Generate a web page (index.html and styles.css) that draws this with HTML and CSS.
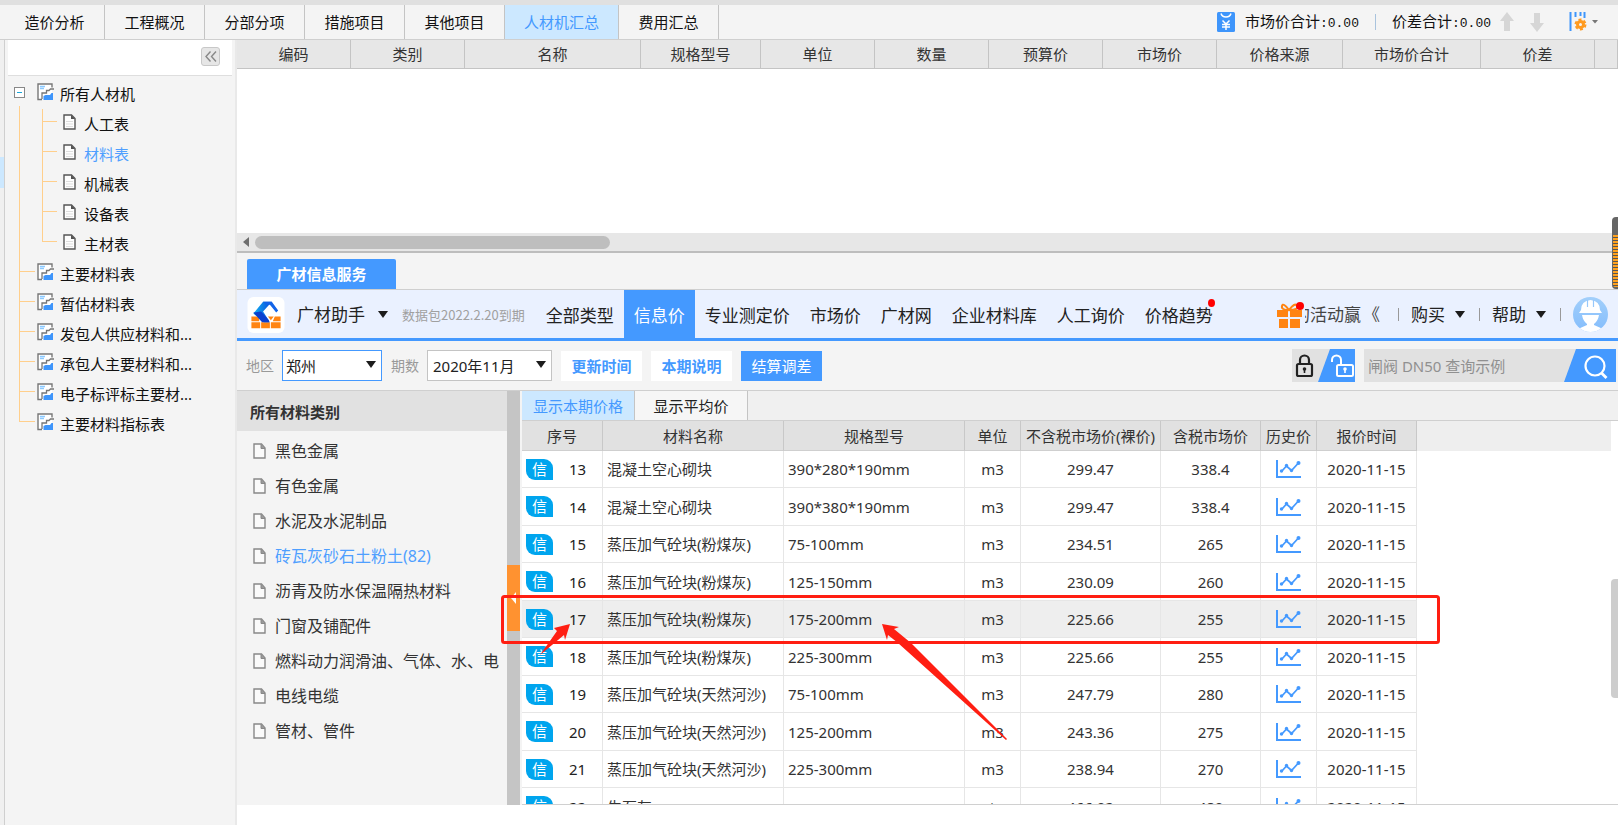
FILE: index.html
```html
<!DOCTYPE html>
<html lang="zh-CN">
<head>
<meta charset="utf-8">
<title>人材机汇总</title>
<link rel="stylesheet" href="styles.css">
</head>
<body>
<svg class="defs" width="0" height="0" aria-hidden="true">
  <symbol id="sheet" viewBox="0 0 17 18"><path d="M1 1h14v16H1z" fill="#fff"/><path d="M5 16.500H1V1h14v3.500" fill="none" stroke="#777" stroke-width="1.400"/><path d="M3 3.500h5M3 5.500h4" stroke="#8ccaff" stroke-width="1.500"/><path d="M5 16V10h4.500V7.500H12L13.500 6H17" fill="none" stroke="#777" stroke-width="1.300"/><path d="M6.500 17v-4l2-1H13l1.500-2H16v7z" fill="#3e95fb"/></symbol>
  <symbol id="doc" viewBox="0 0 13 16"><path d="M1 1h7.500L12 4.500V15H1z" fill="#fdfdfd" stroke="#555" stroke-width="1.400"/><path d="M8 1v4h4z" fill="#555"/><path d="M3 7.500h7M3 10h7M3 12.500h7" stroke="#ddd"/></symbol>
  <symbol id="file" viewBox="0 0 13 16"><path d="M1 1h7.500L12 5v10H1z" fill="#fafafa" stroke="#888" stroke-width="1.400"/><path d="M8 1v4.500h4" fill="#999" stroke="#888"/></symbol>
  <symbol id="chart" viewBox="0 0 25 18"><path d="M1 0v17h24" fill="none" stroke="#4499ff" stroke-width="2"/><path d="M5.500 11.500l5-5.500 5 4.500 6.500-7" fill="none" stroke="#4499ff" stroke-width="1.800"/><g fill="#4499ff"><circle cx="5.500" cy="11" r="1.700"/><circle cx="10.500" cy="5.500" r="1.700"/><circle cx="15.500" cy="10.500" r="1.700"/><circle cx="22.500" cy="3" r="2"/></g></symbol>
  <symbol id="caret" viewBox="0 0 10 7"><path d="M0 0h10L5 7z" fill="#1c1c1c"/></symbol>
</svg>

<div class="app">
  <nav class="top-bar">
    <div class="top-tabs">
      <button class="top-tab">造价分析</button>
      <button class="top-tab">工程概况</button>
      <button class="top-tab">分部分项</button>
      <button class="top-tab">措施项目</button>
      <button class="top-tab">其他项目</button>
      <button class="top-tab active">人材机汇总</button>
      <button class="top-tab">费用汇总</button>
    </div>
    <div class="totals">
      <svg width="18" height="20" viewBox="0 0 18 20"><rect width="18" height="20" rx="1.500" fill="#3e95fb"/><path d="M4 1.500Q5 5 9 5t5-3.500" fill="none" stroke="#fff" stroke-width="1.500"/><path d="M5.500 8.500L9 12l3.500-3.500M5 12.500h8M5 15h8M9 12v6" fill="none" stroke="#fff" stroke-width="1.500"/></svg>
      <span class="total">市场价合计<span class="amount">:0.00</span></span>
      <i class="total-sep"></i>
      <span class="total">价差合计<span class="amount">:0.00</span></span>
      <button class="plain move-up" aria-label="上移"><svg width="14" height="20" viewBox="0 0 14 20"><path d="M7 0l7 9h-4v10H4V9H0z" fill="#d6d6d6"/></svg></button>
      <button class="plain move-down" aria-label="下移"><svg width="14" height="20" viewBox="0 0 14 20"><path d="M7 20l7-9h-4V1H4v10H0z" fill="#d6d6d6"/></svg></button>
      <button class="plain columns" aria-label="列设置"><svg width="29" height="20" viewBox="0 0 29 20"><path d="M1.500 0v19" stroke="#3e95fb" stroke-width="2"/><path d="M6.500 0v5M11.500 0v4M15.500 0v6" stroke="#3e95fb" stroke-width="2"/><g fill="none" stroke="#ff9a1f"><circle cx="11.500" cy="12.500" r="3" stroke-width="3"/><circle cx="11.500" cy="12.500" r="5" stroke-width="2" stroke-dasharray="3 2.240"/></g><path d="M23 8h6l-3 3.500z" fill="#777"/></svg></button>
    </div>
  </nav>

  <div class="body">
    <div class="edge"><i class="edge-mark"></i></div>

    <aside class="sidebar">
      <div class="side-head"><button class="collapse" aria-label="收起"><svg width="12" height="11" viewBox="0 0 12 11"><path d="M5.500 .5l-4.500 5 4.500 5M11 .5l-4.500 5 4.500 5" fill="none" stroke="#888" stroke-width="1.400"/></svg></button></div>
      <ul class="tree">
        <li class="root">
          <div class="node top"><button class="plain expander" aria-label="折叠"><svg width="11" height="11" viewBox="0 0 11 11"><rect x=".5" y=".5" width="10" height="10" fill="#fff" stroke="#888"/><path d="M3 5.500h5" stroke="#19a5d8"/></svg></button><svg width="17" height="18"><use href="#sheet"/></svg><a href="#all">所有人材机</a></div>
          <ul class="children">
            <li><svg width="13" height="16"><use href="#doc"/></svg><a href="#labor">人工表</a></li>
            <li><svg width="13" height="16"><use href="#doc"/></svg><a href="#material" class="current">材料表</a></li>
            <li><svg width="13" height="16"><use href="#doc"/></svg><a href="#machine">机械表</a></li>
            <li><svg width="13" height="16"><use href="#doc"/></svg><a href="#equipment">设备表</a></li>
            <li><svg width="13" height="16"><use href="#doc"/></svg><a href="#main">主材表</a></li>
          </ul>
        </li>
        <li class="node leaf"><svg width="17" height="18"><use href="#sheet"/></svg><a href="#t1">主要材料表</a></li>
        <li class="node leaf"><svg width="17" height="18"><use href="#sheet"/></svg><a href="#t2">暂估材料表</a></li>
        <li class="node leaf"><svg width="17" height="18"><use href="#sheet"/></svg><a href="#t3">发包人供应材料和...</a></li>
        <li class="node leaf"><svg width="17" height="18"><use href="#sheet"/></svg><a href="#t4">承包人主要材料和...</a></li>
        <li class="node leaf"><svg width="17" height="18"><use href="#sheet"/></svg><a href="#t5">电子标评标主要材...</a></li>
        <li class="node leaf"><svg width="17" height="18"><use href="#sheet"/></svg><a href="#t6">主要材料指标表</a></li>
      </ul>
    </aside>

    <main class="main">
      <section class="upper">
        <table class="summary">
          <colgroup><col class="w114"><col class="w114"><col class="w176"><col class="w120"><col class="w114"><col class="w114"><col class="w114"><col class="w114"><col class="w126"><col class="w138"><col class="w114"><col></colgroup>
          <thead><tr><th>编码</th><th>类别</th><th>名称</th><th>规格型号</th><th>单位</th><th>数量</th><th>预算价</th><th>市场价</th><th>价格来源</th><th>市场价合计</th><th>价差</th><th></th></tr></thead>
        </table>
        <div class="hscroll"><svg width="6" height="10" viewBox="0 0 6 10"><path d="M6 0v10L0 5z" fill="#6e6e6e"/></svg><i class="hthumb"></i></div>
      </section>

      <div class="service-tabs"><button class="service-tab">广材信息服务</button></div>

      <header class="ribbon">
        <svg class="logo" width="38" height="37" viewBox="0 0 38 37"><defs><linearGradient id="lg" x1="0" x2="1"><stop offset="0" stop-color="#12b4f5"/><stop offset="1" stop-color="#0b49d8"/></linearGradient></defs><rect width="38" height="37" rx="6" fill="#fff"/><g fill="#ff8412"><path d="M4 20h8v5H4zM4 26h9v6H4zM14 26h9v6h-9zM24 26h10v6H24zM28 20h6v5h-8zM21 20h6l-3 4z"/></g><path d="M16 5h9l-9 10 7 11h-6L6 17z" fill="url(#lg)"/><path d="M6 16l8-1 8 9v2h-7z" fill="#0b3fcf"/><path d="M16 5h9l6.500 9-2 2-6.500-8h-4z" fill="#1263e8"/></svg>
        <button class="plain assistant">广材助手<svg width="10" height="7"><use href="#caret"/></svg></button>
        <span class="expiry">数据包2022.2.20到期</span>
        <nav class="ribbon-nav">
          <a href="#n1">全部类型</a><a href="#n2" class="active">信息价</a><a href="#n3">专业测定价</a><a href="#n4">市场价</a><a href="#n5">广材网</a><a href="#n6">企业材料库</a><a href="#n7">人工询价</a><a href="#n8" class="has-dot">价格趋势</a>
        </nav>
        <div class="ribbon-right">
          <svg class="gift" width="28" height="26" viewBox="0 0 28 26"><g fill="#ff8412"><path d="M0 8h11v7H0zM13 8h12v7H13zM2 17h9v9H2zM13 17h10v9H13z"/></g><path d="M12 8Q4 8 5 4t7 4q6-8 8-4t-8 4" fill="none" stroke="#ff8412" stroke-width="2"/><circle cx="23" cy="4" r="4" fill="#f00"/></svg>
          <span class="promo"><span>的活动赢</span></span>
          <span class="promo-more">《</span>
          <i class="sep"></i>
          <button class="plain menu">购买<svg width="10" height="7"><use href="#caret"/></svg></button>
          <i class="sep"></i>
          <button class="plain menu">帮助<svg width="10" height="7"><use href="#caret"/></svg></button>
          <i class="sep"></i>
          <svg class="avatar" width="35" height="35" viewBox="0 0 35 35"><defs><linearGradient id="av" x1="0" y1="0" x2="0" y2="1"><stop offset="0" stop-color="#a2cffb"/><stop offset="1" stop-color="#84bdfc"/></linearGradient><clipPath id="ac"><circle cx="17.500" cy="17.500" r="17.500"/></clipPath></defs><g clip-path="url(#ac)"><rect width="35" height="35" fill="url(#av)"/><path d="M8 13Q8 4 17.500 3 27 4 27 13l2 3H6zM9 18h17q-1 6-5 9v1l9 4v3H5v-3l9-4v-1q-4-3-5-9z" fill="#fff"/><path d="M14.500 3v7M20.500 3v7" stroke="#97c8fb" stroke-width="1.200"/></g></svg>
        </div>
      </header>

      <form class="filters">
        <label for="region">地区</label>
        <span class="pick region"><select id="region"><option>郑州</option></select><svg width="10" height="7"><use href="#caret"/></svg></span>
        <label for="period">期数</label>
        <span class="pick period"><select id="period"><option>2020年11月</option></select><svg width="10" height="7"><use href="#caret"/></svg></span>
        <button type="button" class="action">更新时间</button>
        <button type="button" class="action">本期说明</button>
        <button type="button" class="action primary">结算调差</button>
        <button type="button" class="plain lock" aria-label="锁定"><svg width="63" height="33" viewBox="0 0 63 33"><rect width="63" height="33" fill="#e1e1e1"/><path d="M38 0h25v33H26z" fill="#4499ff"/><g fill="none" stroke="#222" stroke-width="2.200"><rect x="5" y="15" width="15" height="12" rx="1.500"/><path d="M8 15v-4a4.500 4.500 0 0 1 9 0v4"/></g><circle cx="12.500" cy="20" r="1.800" fill="#222"/><path d="M12.500 20v4" stroke="#222" stroke-width="1.600"/><g fill="none" stroke="#fff" stroke-width="2"><rect x="45" y="16" width="16" height="11" rx="1.500"/><path d="M40 13v-2a4.500 4.500 0 0 1 9 0v5"/></g><circle cx="53" cy="20" r="1.800" fill="#fff"/><path d="M53 20v4" stroke="#fff" stroke-width="1.600"/></svg></button>
        <div class="search"><input type="text" aria-label="查询" placeholder="闸阀 DN50 查询示例"><button type="button" class="plain" aria-label="搜索"><svg width="52" height="33" viewBox="0 0 52 33"><path d="M12 0h40v33H0z" fill="#4499ff"/><circle cx="31" cy="17" r="9.500" fill="none" stroke="#fff" stroke-width="2.200"/><path d="M37.500 24l5 5" stroke="#fff" stroke-width="2.800"/></svg></button></div>
      </form>

      <section class="workspace">
        <div class="categories">
          <h2>所有材料类别</h2>
          <ul>
            <li><svg width="13" height="16"><use href="#file"/></svg><a href="#c1">黑色金属</a></li>
            <li><svg width="13" height="16"><use href="#file"/></svg><a href="#c2">有色金属</a></li>
            <li><svg width="13" height="16"><use href="#file"/></svg><a href="#c3">水泥及水泥制品</a></li>
            <li><svg width="13" height="16"><use href="#file"/></svg><a href="#c4" class="current">砖瓦灰砂石土粉土(82)</a></li>
            <li><svg width="13" height="16"><use href="#file"/></svg><a href="#c5">沥青及防水保温隔热材料</a></li>
            <li><svg width="13" height="16"><use href="#file"/></svg><a href="#c6">门窗及铺配件</a></li>
            <li><svg width="13" height="16"><use href="#file"/></svg><a href="#c7">燃料动力润滑油、气体、水、电</a></li>
            <li><svg width="13" height="16"><use href="#file"/></svg><a href="#c8">电线电缆</a></li>
            <li><svg width="13" height="16"><use href="#file"/></svg><a href="#c9">管材、管件</a></li>
          </ul>
        </div>
        <div class="splitter"><button class="plain handle" aria-label="收起类别"><svg width="5" height="12" viewBox="0 0 5 12"><path d="M5 0v12L0 6z" fill="#fff"/></svg></button></div>
        <div class="prices">
          <div class="price-tabs"><button class="price-tab active">显示本期价格</button><button class="price-tab">显示平均价</button></div>
          <div class="price-scroll">
            <table class="price-table">
              <colgroup><col class="w81"><col class="w181"><col class="w181"><col class="w56"><col class="w140"><col class="w100"><col class="w56"><col class="w100"><col></colgroup>
              <thead><tr><th>序号</th><th>材料名称</th><th>规格型号</th><th>单位</th><th>不含税市场价(裸价)</th><th>含税市场价</th><th>历史价</th><th>报价时间</th><th class="filler"></th></tr></thead>
              <tbody>
                <tr><td><div class="seq"><b>信</b><span>13</span></div></td><td>混凝土空心砌块</td><td>390*280*190mm</td><td>m3</td><td>299.47</td><td>338.4</td><td><svg width="25" height="18"><use href="#chart"/></svg></td><td>2020-11-15</td><td></td></tr>
                <tr><td><div class="seq"><b>信</b><span>14</span></div></td><td>混凝土空心砌块</td><td>390*380*190mm</td><td>m3</td><td>299.47</td><td>338.4</td><td><svg width="25" height="18"><use href="#chart"/></svg></td><td>2020-11-15</td><td></td></tr>
                <tr><td><div class="seq"><b>信</b><span>15</span></div></td><td>蒸压加气砼块(粉煤灰)</td><td>75-100mm</td><td>m3</td><td>234.51</td><td>265</td><td><svg width="25" height="18"><use href="#chart"/></svg></td><td>2020-11-15</td><td></td></tr>
                <tr><td><div class="seq"><b>信</b><span>16</span></div></td><td>蒸压加气砼块(粉煤灰)</td><td>125-150mm</td><td>m3</td><td>230.09</td><td>260</td><td><svg width="25" height="18"><use href="#chart"/></svg></td><td>2020-11-15</td><td></td></tr>
                <tr class="selected"><td><div class="seq"><b>信</b><span>17</span></div></td><td>蒸压加气砼块(粉煤灰)</td><td>175-200mm</td><td>m3</td><td>225.66</td><td>255</td><td><svg width="25" height="18"><use href="#chart"/></svg></td><td>2020-11-15</td><td></td></tr>
                <tr><td><div class="seq"><b>信</b><span>18</span></div></td><td>蒸压加气砼块(粉煤灰)</td><td>225-300mm</td><td>m3</td><td>225.66</td><td>255</td><td><svg width="25" height="18"><use href="#chart"/></svg></td><td>2020-11-15</td><td></td></tr>
                <tr><td><div class="seq"><b>信</b><span>19</span></div></td><td>蒸压加气砼块(天然河沙)</td><td>75-100mm</td><td>m3</td><td>247.79</td><td>280</td><td><svg width="25" height="18"><use href="#chart"/></svg></td><td>2020-11-15</td><td></td></tr>
                <tr><td><div class="seq"><b>信</b><span>20</span></div></td><td>蒸压加气砼块(天然河沙)</td><td>125-200mm</td><td>m3</td><td>243.36</td><td>275</td><td><svg width="25" height="18"><use href="#chart"/></svg></td><td>2020-11-15</td><td></td></tr>
                <tr><td><div class="seq"><b>信</b><span>21</span></div></td><td>蒸压加气砼块(天然河沙)</td><td>225-300mm</td><td>m3</td><td>238.94</td><td>270</td><td><svg width="25" height="18"><use href="#chart"/></svg></td><td>2020-11-15</td><td></td></tr>
                <tr><td><div class="seq"><b>信</b><span>22</span></div></td><td>生石灰</td><td></td><td>t</td><td>466.02</td><td>480</td><td><svg width="25" height="18"><use href="#chart"/></svg></td><td>2020-11-15</td><td></td></tr>
              </tbody>
            </table>
          </div>
          <i class="vthumb"></i>
        </div>
        <svg class="marks" width="1" height="1"><g transform="translate(-237 -391)" fill="#ff1e12"><rect x="502.500" y="596.500" width="936" height="46" rx="2" fill="none" stroke="#ff1e12" stroke-width="3"/><path d="M570 624l-16 4 3 3-17 24 24-20 1 5z"/><path d="M882 624l17 3-5 2 17 14 96 96-1 1-108-97-10-8-1 5z"/></g></svg>
      </section>
      <footer class="status"></footer>
    </main>
  </div>
  <i class="gauge"></i>
</div>
</body>
</html>
```
FILE: styles.css
```css
* { box-sizing: border-box; }

body {
  margin: 0;
  background: #f4f4f4;
  color: #111;
  font: 15px/20px "Noto Sans", "Noto Sans CJK SC", sans-serif;
}

button, select, input { font: inherit; color: inherit; margin: 0; border-radius: 0; }
button { padding: 0; border: 0; background: none; }
a { color: inherit; text-decoration: none; white-space: nowrap; }
ul { list-style: none; margin: 0; padding: 0; }
svg { display: block; flex: none; }
i { display: block; flex: none; }
.defs { position: absolute; }
.plain { display: flex; align-items: center; }

.app { position: relative; display: flex; flex-direction: column; height: 100vh; overflow: hidden; }

/* top tabs */
.top-bar {
  display: flex;
  justify-content: space-between;
  flex: none;
  height: 40px;
  padding-left: 5px;
  border-top: 5px solid #e0e0e0;
  border-bottom: 1px solid #cfcfcf;
}
.top-tabs { display: flex; }
.top-tab { min-width: 100px; padding: 0 19px; border-right: 1px solid #c4c4c4; }
.top-tab.active { background: #cce8ff; color: #4499ff; }
.totals { display: flex; align-items: center; padding-right: 20px; }
.total { margin-left: 10px; }
.amount { font: 13px/20px "Liberation Mono", monospace; }
.total-sep { width: 1px; height: 16px; margin: 0 6px 0 16px; background: #a9c3dd; }
.move-up { margin-left: 9px; }
.move-down { margin-left: 16px; }
.columns { margin-left: 25px; }

.body { display: flex; flex: 1; min-height: 0; }
.edge { flex: none; width: 5px; padding-top: 117px; border-right: 1px solid #cfcfcf; background: #f0f0f0; }
.edge-mark { height: 31px; background: #cce8ff; }

/* tree */
.sidebar { flex: none; width: 232px; border-right: 2px solid #e9e9e9; }
.side-head {
  display: flex;
  justify-content: flex-end;
  align-items: center;
  height: 36px;
  margin: 0 3px;
  padding: 0 12px 2px 0;
  border-bottom: 1px solid #dedede;
  background: #fff;
}
.collapse { display: grid; place-items: center; width: 19px; height: 19px; border: 1px solid #c8c8c8; border-radius: 3px; background: #e6e6e6; }
.tree { padding-top: 3px; --line: linear-gradient(#ffcf8c, #ffcf8c); }
.root { background: var(--line) 14px 27px / 1px 100% no-repeat; }
.node { display: flex; align-items: center; height: 30px; padding-left: 32px; gap: 6px; }
.node.top { padding-left: 9px; }
.expander { margin-right: 6px; }
.leaf { background: var(--line) 14px 0 / 1px 100% no-repeat, var(--line) 14px 12px / 16px 1px no-repeat; }
.leaf:last-child { background-size: 1px 12px, 16px 1px; }
.children li {
  display: flex;
  align-items: center;
  height: 30px;
  gap: 8px;
  padding-left: 58px;
  background: var(--line) 37px 0 / 1px 100% no-repeat, var(--line) 37px 12px / 15px 1px no-repeat;
}
.children li:last-child { background-size: 1px 12px, 15px 1px; }
.tree svg { margin-bottom: 4px; }
.current { color: #4f9fff; }

/* upper grid */
.main { display: flex; flex-direction: column; flex: 1; min-width: 0; }
.upper { display: flex; flex-direction: column; justify-content: space-between; flex: none; height: 213px; border-bottom: 2px solid #bdbdbd; background: #fff; }
table { width: 100%; table-layout: fixed; border-collapse: separate; border-spacing: 0; }
th { padding: 0; font-weight: 400; white-space: nowrap; }
.summary th { height: 29px; border-right: 1px solid #c4c4c4; border-bottom: 1px solid #c4c4c4; background: #e7e7e7; color: #333; }
.w56 { width: 56px; }
.w81 { width: 81px; }
.w100 { width: 100px; }
.w114 { width: 114px; }
.w120 { width: 120px; }
.w126 { width: 126px; }
.w138 { width: 138px; }
.w140 { width: 140px; }
.w176 { width: 176px; }
.w181 { width: 181px; }
.hscroll { display: flex; align-items: center; gap: 6px; height: 18px; padding-left: 6px; background: #e7e7e7; }
.hthumb { width: 355px; height: 13px; border-radius: 7px; background: #bebebe; }

.service-tabs { flex: none; padding: 6px 10px 0; border-bottom: 1px solid #cfcfcf; }
.service-tab { display: block; width: 149px; height: 30px; border-radius: 2px 2px 0 0; background: #4499ff; color: #fff; font-weight: 700; }

/* ribbon */
.ribbon { display: flex; align-items: center; flex: none; height: 51px; padding: 0 10px; border-bottom: 3px solid #4499ff; background: #eaf1ff; color: #222; font-size: 17px; }
.ribbon > *, .ribbon-right { padding-top: 1px; }
.assistant { gap: 13px; margin-left: 12px; }
.expiry { margin-left: 14px; color: #a0a0a0; font: 13px/20px "Noto Sans CJK SC", sans-serif; white-space: nowrap; }
.ribbon-nav { display: flex; align-self: stretch; margin-left: 11px; padding: 0; }
.ribbon-nav a { display: flex; align-items: center; padding: 4px 10px 0; }
.ribbon-nav .active { background: #4499ff; color: #fff; }
.has-dot { position: relative; }
.has-dot::after { content: ""; position: absolute; top: 9px; right: 8px; width: 7px; height: 8px; border-radius: 50%; background: #f00; }
.ribbon-right { display: flex; align-items: center; margin-left: auto; }
.promo { display: flex; justify-content: flex-end; width: 56px; overflow: hidden; color: #444; white-space: nowrap; }
.promo-more { width: 17px; margin-left: 2px; color: #444; }
.sep { width: 1px; height: 13px; margin: 0 12px 0 18px; background: #999; }
.menu { gap: 10px; }
.menu + .sep { margin-left: 14px; }

/* filters */
.filters { display: flex; align-items: center; flex: none; height: 50px; padding: 0 2px 0 9px; border-bottom: 1px solid #cfcfcf; color: #222; }
.filters label { color: #999; font-size: 14px; }
.pick { position: relative; height: 31px; margin: 0 9px 0 8px; }
.pick select { width: 100%; height: 100%; padding: 0 5px; border: 1px solid #c4c4c4; background: #fff; appearance: none; }
.pick svg { position: absolute; right: 6px; top: 11px; pointer-events: none; }
.region { width: 100px; }
.region select { padding: 0 3px; border-color: #4499ff; }
.period { width: 125px; }
.action { width: 81px; height: 30px; margin-right: 9px; background: #fff; color: #4499ff; font-weight: 700; }
.action.primary { background: #4499ff; color: #fff; font-weight: 400; }
.lock { margin-left: auto; }
.search { display: flex; width: 252px; margin-left: 9px; background: #e1e1e1; }
.search input { flex: 1; min-width: 0; padding: 0 4px; border: 0; background: transparent; }
.search input::placeholder { color: #909090; }

/* workspace */
.workspace { position: relative; display: flex; flex: 1; min-height: 0; }
.marks { position: absolute; left: 0; top: 0; overflow: visible; pointer-events: none; }
.categories { flex: none; width: 270px; overflow: hidden; color: #333; }
.categories h2 { margin: 0 0 2px; padding: 11px 13px 9px; background: #e1e1e1; font-size: 15px; line-height: 20px; font-weight: 700; }
.categories li { display: flex; align-items: center; gap: 9px; height: 35px; padding-left: 16px; font-size: 16px; }
.splitter { flex: none; width: 13px; margin-right: 2px; padding-top: 174px; background: #c5c5c5; }
.handle { width: 13px; height: 66px; padding-left: 4px; background: #ff9230; }
.prices { position: relative; display: flex; flex-direction: column; flex: 1; min-width: 0; border-bottom: 1px solid #d0d0d0; background: #fff; }
.price-tabs { display: flex; flex: none; height: 30px; border-bottom: 1px solid #cfcfcf; background: #f0f0f0; color: #222; }
.price-tab { min-width: 113px; padding: 0 11px; border-right: 1px solid #c4c4c4; background: #f6f6f6; }
.price-tab.active { background: #cce8ff; color: #4499ff; }
.price-scroll { flex: 1; min-height: 0; margin-right: 7px; overflow: hidden; }
.price-table { color: #333; }
.price-table th { height: 30px; border-right: 1px solid #c8c8c8; border-bottom: 1px solid #cfcfcf; background: #e1e1e1; }
.price-table th.filler { border: 0; background: #eee; }
.price-table td { height: 38px; padding: 0; border-right: 1px solid #e6e6e6; border-bottom: 1px solid #e6e6e6; text-align: center; white-space: nowrap; }
.price-table tr:nth-child(odd) td { height: 37px; }
.price-table td:nth-child(2), .price-table td:nth-child(3) { padding-left: 4px; text-align: left; }
.price-table td:last-child { border: 0; }
.price-table td > svg { margin: 0 auto; }
.price-table .selected td:not(:last-child) { background: #eee; }
.seq { display: flex; align-items: center; padding-left: 4px; color: #222; }
.seq b { flex: none; width: 27px; height: 21px; border-radius: 0 9px 0 9px; background: #00a5ee; color: #fff; font-weight: 400; }
.seq span { flex: 1; }
.vthumb { position: absolute; right: 0; top: 188px; width: 7px; height: 119px; border-radius: 4px 0 0 4px; background: #cdcdcd; }
.status { flex: none; height: 20px; background: #fff; }

.gauge {
  position: absolute;
  right: 0;
  top: 217px;
  width: 6px;
  height: 72px;
  border: solid #666;
  border-width: 18px 0 2px 1px;
  border-radius: 4px 0 0 4px;
  background: repeating-linear-gradient(#ffa21f 0 2px, #555 2px 3px);
}
```
